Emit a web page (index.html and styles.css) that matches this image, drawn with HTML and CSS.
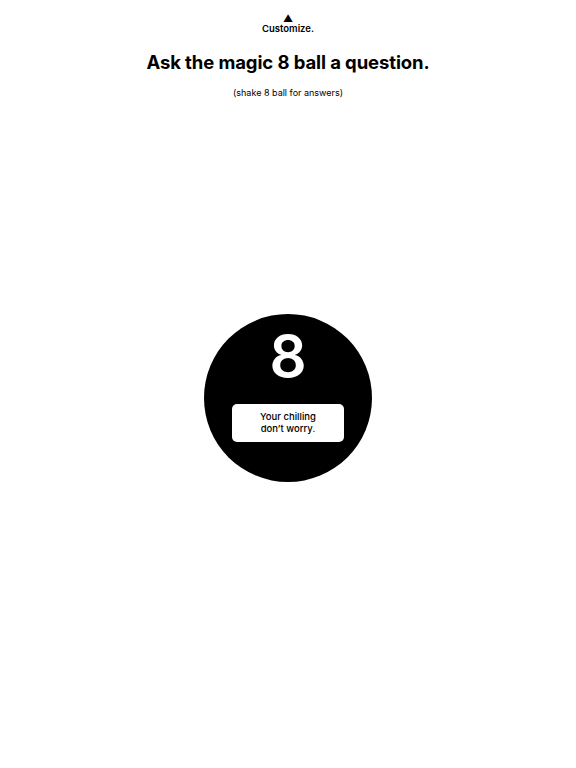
FILE: index.html
```html
<!DOCTYPE html>
<html>
<head>
<meta charset="utf-8">
<link rel="stylesheet" href="styles.css">
</head>
<body>
<div class="page">
  <div class="customize">
    <span class="tri">▲</span>
    <span class="label">Customize.</span>
  </div>
  <h1 class="title">Ask the magic 8 ball a question.</h1>
  <p class="sub">(shake 8 ball for answers)</p>
  <div class="ball">
    <div class="eight">8</div>
    <div class="answer">Your chilling<br>don’t worry.</div>
  </div>
</div>
</body>
</html>
```
FILE: styles.css
```css
html, body { margin: 0; padding: 0; background: #fff; }
body { font-family: Inter, "Noto Sans", sans-serif; color: #000; }
.page { display: flex; flex-direction: column; align-items: center; }
.customize { display: flex; flex-direction: column; align-items: center; margin-top: 13px; }
.tri { font-size: 10px; line-height: 10px; }
.label { font-size: 9.5px; font-weight: 600; line-height: 12px; }
.title { margin: 13px 0 0; font-size: 18.5px; font-weight: 700; line-height: 28px; letter-spacing: -0.1px; }
.sub { margin: 11px 0 0; font-size: 9px; line-height: 12px; }
.ball { margin-top: 215px; width: 168px; height: 168px; border-radius: 50%; background: #000; display: flex; flex-direction: column; align-items: center; }
.eight { color: #fff; font-size: 58px; font-weight: 600; line-height: 58px; margin-top: 13px; }
.answer { margin-top: 19px; width: 112px; height: 38px; background: #fff; border-radius: 5px; display: flex; align-items: center; justify-content: center; text-align: center; font-size: 9.5px; font-weight: 500; line-height: 12px; }
```
